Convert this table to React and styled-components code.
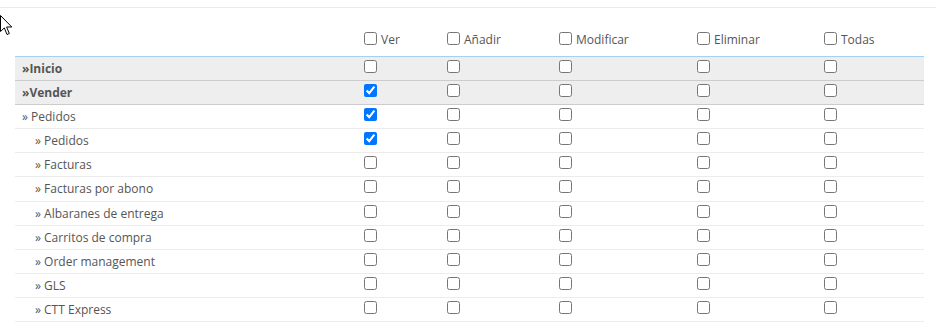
import React from "react";
import styled, { createGlobalStyle } from "styled-components";

const Global = createGlobalStyle`
  html, body { margin: 0; padding: 0; background: #fff; }
  body { font-family: "Open Sans", "Liberation Sans", sans-serif; font-size: 12px; color: #555; }
  * { box-sizing: border-box; }
`;

const COLS = "345px 83px 112px 138px 127px 104px";

const Page = styled.div`
  position: relative;
  width: 936px;
  height: 323px;
  overflow: hidden;
`;

const TopRule = styled.div`
  margin-top: 7px;
  height: 1px;
  background: #eaeaea;
`;

const Table = styled.div`
  margin: 0 12px 0 15px;
  width: 909px;
`;

const HeaderRow = styled.div`
  display: grid;
  grid-template-columns: ${COLS};
  height: 49px;
  align-items: end;
  padding-bottom: 8px;
  border-bottom: 1px solid #a6d0ef;
`;

const Row = styled.div`
  display: grid;
  grid-template-columns: ${COLS};
  height: 24.1px;
  align-items: start;
  padding-top: 3px;
  line-height: 17px;
  background: ${(p) => (p.$group ? "#eeeeee" : "#fff")};
  border-bottom: 1px solid ${(p) => (p.$group ? "#cccccc" : "#ececec")};
`;

const NameCell = styled.div`
  padding-left: ${(p) => (p.$level === 2 ? 20 : 7)}px;
  font-weight: ${(p) => (p.$group ? 700 : 400)};
  color: #555;
  white-space: nowrap;
`;

const Cell = styled.div`
  display: flex;
  align-items: flex-start;
`;

const Box = styled.input.attrs({ type: "checkbox" })`
  width: 13px;
  height: 13px;
  margin: 0 3px 0 4px;
`;

const HeadLabel = styled.label`
  display: flex;
  align-items: center;
  color: #555;
  line-height: 17px;
`;

const HeadBox = styled(Box)`
  margin: -2px 4px 0 4px;
`;

const Cursor = styled.svg`
  position: absolute;
  left: 0;
  top: 15px;
`;

const headers = ["Ver", "Añadir", "Modificar", "Eliminar", "Todas"];

const rows = [
  { name: "»Inicio", group: true, checks: [] },
  { name: "»Vender", group: true, checks: [0] },
  { name: "» Pedidos", level: 1, checks: [0] },
  { name: "» Pedidos", level: 2, checks: [0] },
  { name: "» Facturas", level: 2, checks: [] },
  { name: "» Facturas por abono", level: 2, checks: [] },
  { name: "» Albaranes de entrega", level: 2, checks: [] },
  { name: "» Carritos de compra", level: 2, checks: [] },
  { name: "» Order management", level: 2, checks: [] },
  { name: "» GLS", level: 2, checks: [] },
  { name: "» CTT Express", level: 2, checks: [] },
];

export default function App() {
  return (
    <Page>
      <Global />
      <TopRule />
      <Table>
        <HeaderRow>
          <div />
          {headers.map((h) => (
            <Cell key={h}>
              <HeadLabel>
                <HeadBox />
                {h}
              </HeadLabel>
            </Cell>
          ))}
        </HeaderRow>
        {rows.map((r, i) => (
          <Row key={i} $group={r.group}>
            <NameCell $group={r.group} $level={r.level}>
              {r.name}
            </NameCell>
            {headers.map((h, j) => (
              <Cell key={h}>
                <Box defaultChecked={r.checks.includes(j)} />
              </Cell>
            ))}
          </Row>
        ))}
      </Table>
      <Cursor width="13" height="21" viewBox="0 0 13 21">
        <path
          d="M0.5 0.5 L0.5 16.5 L4.3 12.9 L7 19.5 L9.3 18.5 L6.6 12 L11.8 12 Z"
          fill="#fff"
          stroke="#000"
          strokeWidth="1"
          strokeLinejoin="miter"
        />
      </Cursor>
    </Page>
  );
}
